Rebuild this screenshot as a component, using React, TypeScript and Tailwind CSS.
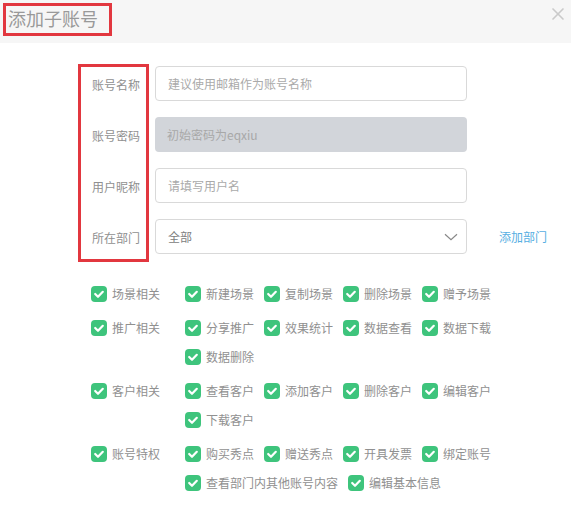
import { X } from 'lucide-react';

const groups = [
  { title: '场景相关', items: ['新建场景', '复制场景', '删除场景', '赠予场景'] },
  { title: '推广相关', items: ['分享推广', '效果统计', '数据查看', '数据下载', '数据删除'] },
  { title: '客户相关', items: ['查看客户', '添加客户', '删除客户', '编辑客户', '下载客户'] },
  { title: '账号特权', items: ['购买秀点', '赠送秀点', '开具发票', '绑定账号', '查看部门内其他账号内容', '编辑基本信息'] },
];

function Check({ label }: { label: string }) {
  return (
    <label className="h-[29px] flex items-center gap-[5px] mr-[10px] cursor-pointer">
      <span className="w-[16px] h-[16px] rounded-[4px] bg-[#3ec47c] flex items-center justify-center shrink-0">
        <svg width="12" height="12" viewBox="0 0 12 12" fill="none">
          <path d="M2.2 6 L5 8.8 L9.8 3.8" stroke="white" strokeWidth="2.2" strokeLinecap="round" strokeLinejoin="round" />
        </svg>
      </span>
      <span className="text-[12px] leading-none text-[#909090] whitespace-nowrap">{label}</span>
    </label>
  );
}

export default function App() {
  const inputCls =
    'w-[312px] h-[35px] px-[12px] border border-[#d9d9d9] rounded-[4px] text-[12px] text-[#777] placeholder:text-[#aaa] focus:outline-none bg-white';

  return (
    <div className="w-[571px] h-[507px] bg-white overflow-hidden font-['Noto_Sans_CJK_SC','Liberation_Sans',sans-serif]">
      {/* Header */}
      <div className="h-[43px] bg-[#f6f6f6] flex items-start justify-between">
        <h2 className="mt-[3px] ml-[3px] w-[109px] h-[33px] border-[3px] border-[#e2373f] flex items-center pl-[2px] pb-[3px] text-[18px] leading-none text-[#999] font-normal">
          添加子账号
        </h2>
        <button type="button" className="mt-[4px] mr-[3px] text-[#cacaca]">
          <X size={20} strokeWidth={2} />
        </button>
      </div>

      {/* Form */}
      <div className="pt-[23px] pl-[78px] flex items-start">
        <div className="-mt-[2px] w-[71px] border-[3px] border-[#e2373f] pl-[11px] pb-[4px] flex flex-col gap-[16px]">
          {['账号名称', '账号密码', '用户昵称', '所在部门'].map((l) => (
            <div key={l} className="h-[35px] flex items-center text-[12px] text-[#909090] whitespace-nowrap">
              {l}
            </div>
          ))}
        </div>

        <div className="ml-[6px] flex flex-col gap-[16px]">
          <input className={inputCls} placeholder="建议使用邮箱作为账号名称" />
          <input
            className="w-[312px] h-[35px] px-[12px] rounded-[4px] text-[12px] bg-[#d2d5da] placeholder:text-[#a8a8a8] focus:outline-none"
            placeholder="初始密码为eqxiu"
            disabled
          />
          <input className={inputCls} placeholder="请填写用户名" />
          <div className="flex items-center">
            <div className="w-[312px] h-[35px] pl-[12px] pr-[8px] border border-[#d9d9d9] rounded-[4px] flex items-center justify-between text-[12px] text-[#808080]">
              <span>全部</span>
              <svg width="14" height="8" viewBox="0 0 14 8" fill="none">
                <path d="M1 1.2 L7 6.6 L13 1.2" stroke="#888" strokeWidth="1.2" />
              </svg>
            </div>
            <a className="ml-[32px] text-[12px] text-[#56aee2] whitespace-nowrap cursor-pointer">添加部门</a>
          </div>
        </div>
      </div>

      {/* Permissions */}
      <div className="mt-[17px] pl-[91px] flex flex-col gap-[5px]">
        {groups.map((g) => (
          <div key={g.title} className="flex items-start">
            <div className="w-[94px] shrink-0">
              <Check label={g.title} />
            </div>
            <div className="w-[330px] flex flex-wrap">
              {g.items.map((it) => (
                <Check key={it} label={it} />
              ))}
            </div>
          </div>
        ))}
      </div>
    </div>
  );
}
